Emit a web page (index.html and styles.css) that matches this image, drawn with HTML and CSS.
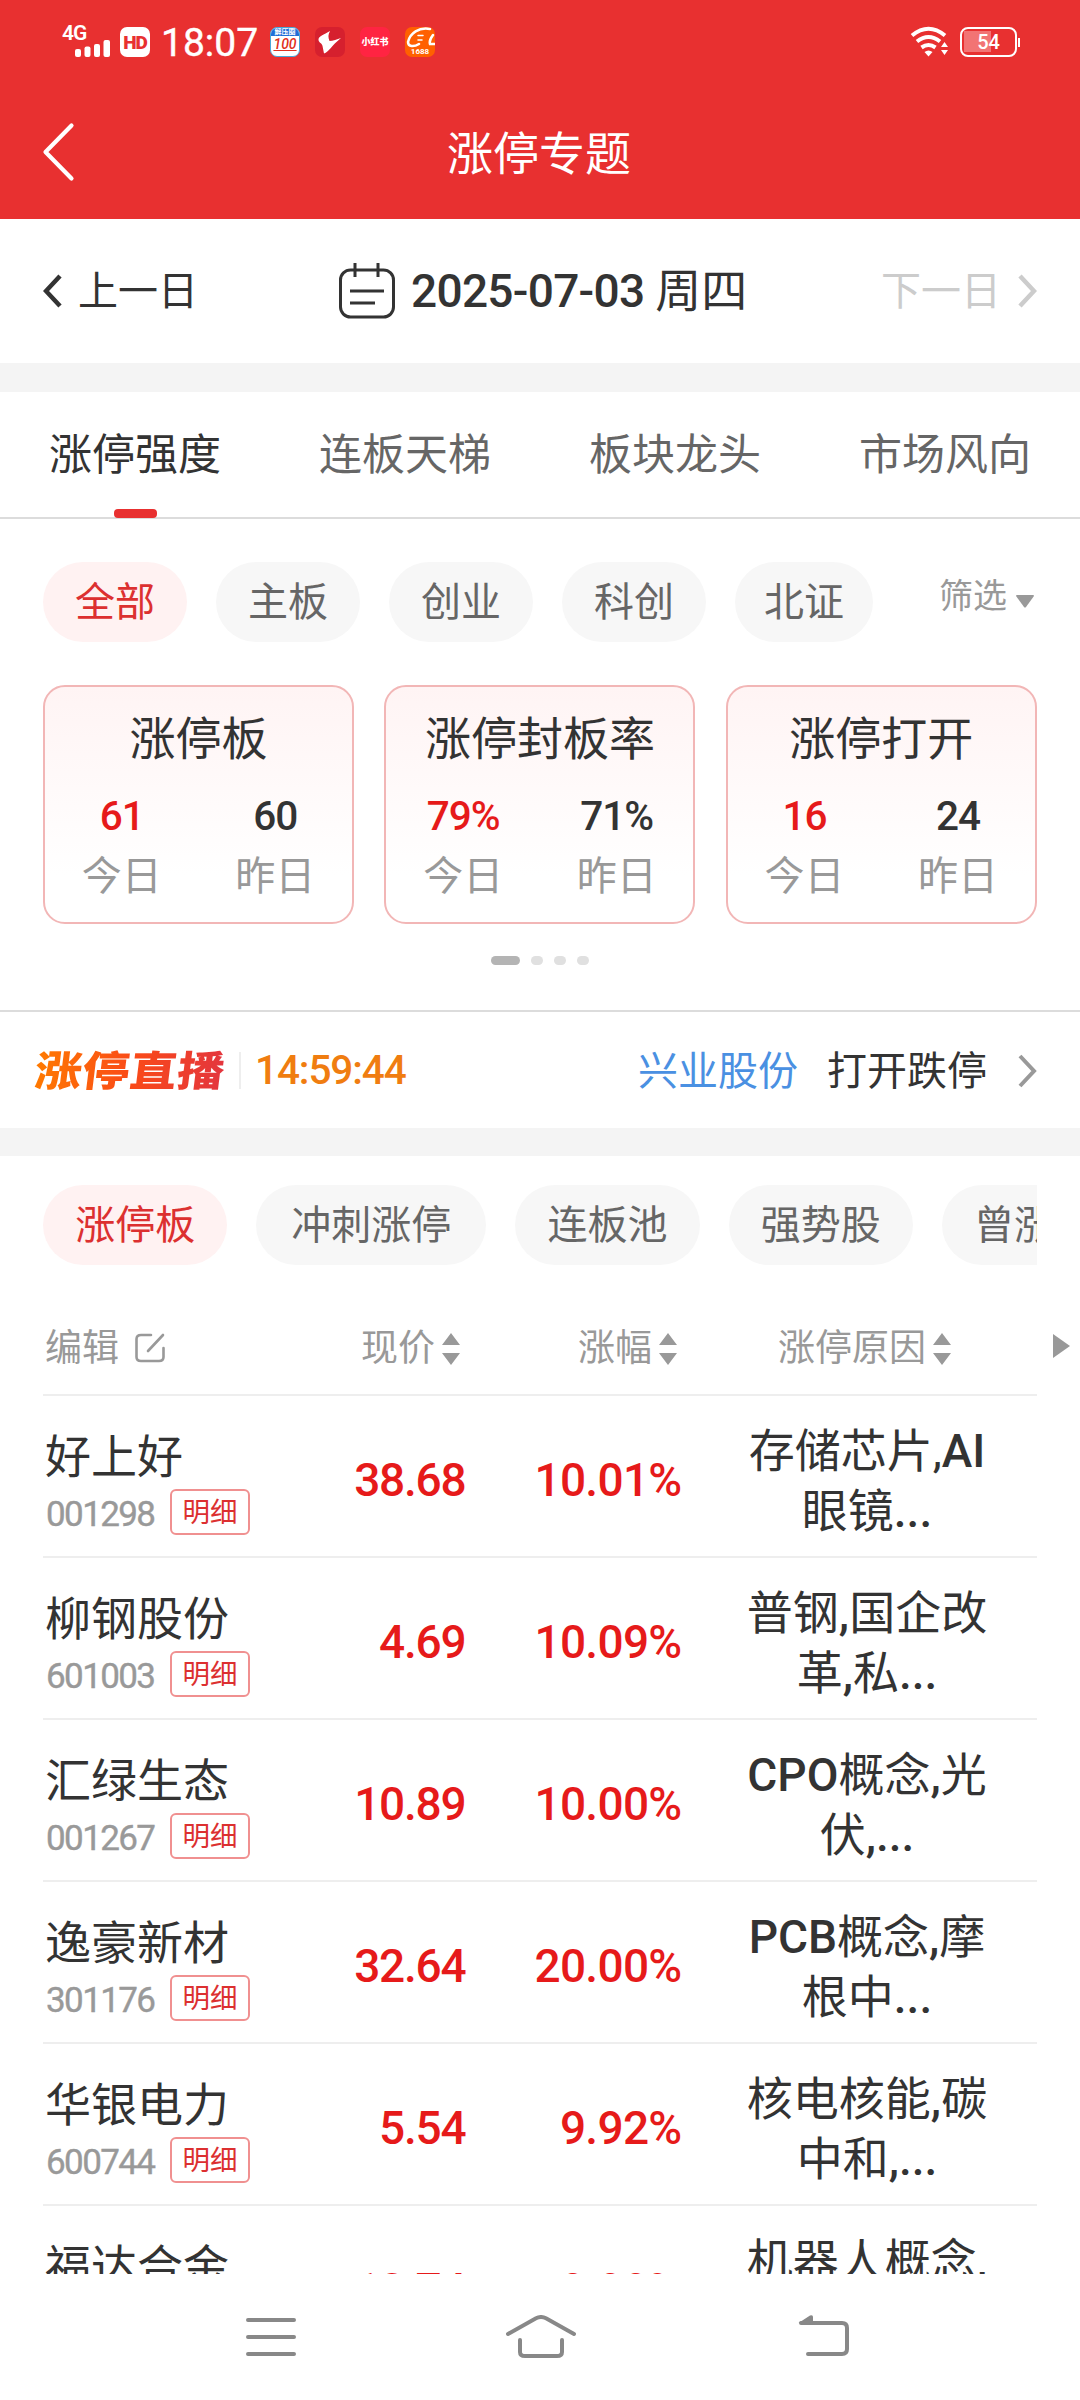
FILE: index.html
```
<!DOCTYPE html>
<html lang="zh-CN">
<head>
<meta charset="utf-8">
<title>涨停专题</title>
<link rel="stylesheet" href="styles.css">
</head>
<body>
<header class="top">
  <div class="status">
    <div class="signal">
      <span class="net">4G</span>
      <svg class="bars" width="36" height="18" viewBox="0 0 36 18" fill="#fff"><rect x="0" y="9" width="6" height="8" rx="2"/><rect x="9.500" y="6.500" width="6" height="10.500" rx="2"/><rect x="19" y="4" width="6" height="13" rx="2"/><rect x="28.500" y="0" width="6.500" height="17" rx="2"/></svg>
    </div>
    <span class="hd">HD</span>
    <span class="clock">18:07</span>
    <div class="apps">
      <div class="app app-score"><span class="strip">解压圈</span><span class="hundred">100</span></div>
      <div class="app app-bird"><svg width="30" height="30" viewBox="0 0 30 30"><path fill="#fff" d="M15 4C9 8 3 9 3.500 13C4 16 7 16 7.500 19L9 26.500C14 25 16 19 26 11C22 12 18 14 14.500 14C13 10 13 8 15 4Z"/></svg></div>
      <div class="app app-book">小红书</div>
      <div class="app app-ali"><svg width="30" height="30" viewBox="0 0 30 30" fill="none" stroke="#fff" stroke-width="2.500" stroke-linecap="round"><path d="M25 2C14 0 5 6 3 15C3 20 9 20 14 17"/><path d="M13 8.500H18M13 13H17" stroke-width="1.500"/><path d="M28 8C25 12 24 14 25 17H30"/></svg><span class="ali-num">1688</span></div>
    </div>
    <div class="right">
      <svg width="40" height="32" viewBox="0 0 40 32"><g fill="none" stroke="#fff" stroke-width="4"><path d="M2 9.500Q18.500 -4 35 9.500"/><path d="M7 15.500Q18.500 6.500 30 15.500"/><path d="M11.500 21.500Q18.500 16.500 25.500 21.500"/></g><path fill="#fff" d="M14.500 26Q18.500 23 22.500 26L18.500 30.500Z M31 21L34.500 16L38 21Z M31 24L34.500 29L38 24Z"/></svg>
      <div class="battery"><span>54</span></div><i class="nub"></i>
    </div>
  </div>
  <div class="titlebar">
    <svg class="back" width="34" height="60" viewBox="0 0 34 60"><path d="M29.500 3.500L3.500 30L29.500 56.500" fill="none" stroke="#fff" stroke-width="4.200" stroke-linecap="round" stroke-linejoin="round"/></svg>
    <h1>涨停专题</h1>
  </div>
</header>

<section class="dates">
  <div class="prev"><svg width="20" height="36" viewBox="0 0 20 36"><path d="M17 3L3 18L17 33" fill="none" stroke="#333" stroke-width="4.500"/></svg><span>上一日</span></div>
  <div class="date">
    <svg width="56" height="56" viewBox="0 0 56 56" fill="none" stroke="#333" stroke-width="3"><rect x="1.500" y="7" width="53" height="47" rx="10"/><path d="M16 0V14M39 0V14M11 28H45M11 40H36"/></svg>
    <span>2025-07-03 <span class="week">周四</span></span>
  </div>
  <div class="next"><span>下一日</span><svg width="20" height="36" viewBox="0 0 20 36"><path d="M3 3L17 18L3 33" fill="none" stroke="#ccc" stroke-width="4.500"/></svg></div>
</section>
<div class="band"></div>

<nav class="tabs">
  <span class="tab on">涨停强度</span><span class="tab">连板天梯</span><span class="tab">板块龙头</span><span class="tab">市场风向</span>
</nav>

<section class="strength">
  <div class="filters">
    <span class="pill on">全部</span><span class="pill">主板</span><span class="pill">创业</span><span class="pill">科创</span><span class="pill narrow">北证</span>
    <span class="sift">筛选<svg width="18" height="13" viewBox="0 0 18 13"><path fill="#999" d="M0 1Q0 0 1 0H17Q18 0 18 1L10 12Q9 13 8 12Z"/></svg></span>
  </div>
  <div class="cards">
    <div class="card"><h2>涨停板</h2><div class="pair"><b class="red">61</b><b>60</b><span>今日</span><span>昨日</span></div></div>
    <div class="card"><h2>涨停封板率</h2><div class="pair"><b class="red">79%</b><b>71%</b><span>今日</span><span>昨日</span></div></div>
    <div class="card"><h2>涨停打开</h2><div class="pair"><b class="red">16</b><b>24</b><span>今日</span><span>昨日</span></div></div>
  </div>
  <div class="dots"><i class="on"></i><i></i><i></i><i></i></div>
</section>

<section class="live">
  <span class="logo">涨停直播</span><i class="rule"></i><span class="time">14:59:44</span>
  <span class="stock">兴业股份</span><span class="event">打开跌停</span>
  <svg class="go" width="20" height="36" viewBox="0 0 20 36"><path d="M3 3L17 18L3 33" fill="none" stroke="#999" stroke-width="4"/></svg>
</section>
<div class="band low"></div>

<section class="list">
  <div class="pools"><span class="pill on">涨停板</span><span class="pill wide">冲刺涨停</span><span class="pill">连板池</span><span class="pill">强势股</span><span class="pill">曾涨停</span></div>
  <div class="thead">
    <span class="edit">编辑<svg width="30" height="30" viewBox="0 0 30 30" fill="none" stroke="#999" stroke-width="2.600" stroke-linecap="round"><path d="M16 2H6Q1.500 2 1.500 6V24Q1.500 28 6 28H24Q28.500 28 28.500 24V15M28 2L13 18"/></svg></span>
    <span class="h-price">现价<svg class="sort" viewBox="0 0 18 32"><path d="M9 0L18 12H0ZM9 32L18 20H0Z"/></svg></span>
    <span class="h-pct">涨幅<svg class="sort" viewBox="0 0 18 32"><path d="M9 0L18 12H0ZM9 32L18 20H0Z"/></svg></span>
    <span class="h-why">涨停原因<svg class="sort" viewBox="0 0 18 32"><path d="M9 0L18 12H0ZM9 32L18 20H0Z"/></svg></span>
    <svg class="more" width="17" height="24" viewBox="0 0 17 24"><path d="M0 0L17 12L0 24Z" fill="#999"/></svg>
  </div>
  <div class="rows">
    <div class="row"><div class="who"><p>好上好</p><div><span class="code">001298</span><span class="tag">明细</span></div></div><b>38.68</b><b class="pct">10.01%</b><div class="why">存储芯片,<em>AI</em><br>眼镜<em>...</em></div></div>
    <div class="row"><div class="who"><p>柳钢股份</p><div><span class="code">601003</span><span class="tag">明细</span></div></div><b>4.69</b><b class="pct">10.09%</b><div class="why">普钢<em>,</em>国企改<br>革<em>,</em>私<em>...</em></div></div>
    <div class="row"><div class="who"><p>汇绿生态</p><div><span class="code">001267</span><span class="tag">明细</span></div></div><b>10.89</b><b class="pct">10.00%</b><div class="why"><em>CPO</em>概念<em>,</em>光<br>伏<em>,...</em></div></div>
    <div class="row"><div class="who"><p>逸豪新材</p><div><span class="code">301176</span><span class="tag">明细</span></div></div><b>32.64</b><b class="pct">20.00%</b><div class="why"><em>PCB</em>概念<em>,</em>摩<br>根中<em>...</em></div></div>
    <div class="row"><div class="who"><p>华银电力</p><div><span class="code">600744</span><span class="tag">明细</span></div></div><b>5.54</b><b class="pct">9.92%</b><div class="why">核电核能<em>,</em>碳<br>中和<em>,...</em></div></div>
    <div class="row"><div class="who"><p>福达合金</p></div><b>10.74</b><b class="pct">9.99%</b><div class="why">机器人概念<em>,</em></div></div>
  </div>
</section>

<footer class="sysnav">
  <svg class="menu" width="52" height="40" viewBox="0 0 52 40" stroke="#888" stroke-width="4" stroke-linecap="round"><path d="M3 3H49M3 20H49M3 37H49"/></svg>
  <svg class="home" width="72" height="46" viewBox="0 0 72 46" fill="none" stroke="#888" stroke-width="4" stroke-linecap="round"><path d="M3 19L31 3.200Q36 0.800 41 3.200L69 19M15 25V37Q15 41 20 41H52Q57 41 57 37V25"/></svg>
  <svg width="52" height="44" viewBox="0 0 52 44"><path d="M3 8H44Q49 8 49 13V34Q49 39 44 39H10" fill="none" stroke="#888" stroke-width="4" stroke-linecap="round"/><path fill="#888" d="M0.500 8L12 0.500Q15 -0.500 15 2V9Z"/></svg>
</footer>
</body>
</html>
```
FILE: styles.css
```
* { box-sizing: border-box; margin: 0; padding: 0; }
body { width: 1080px; height: 2400px; overflow: hidden; background: #fff; color: #333; font-family: Roboto, "Noto Sans CJK SC", sans-serif; display: flex; flex-direction: column; }
svg { display: block; flex: none; }
i { display: block; flex: none; }
em { font-style: normal; font-weight: 500; }
h1, h2, p { font-weight: 400; }
.top { height: 219px; background: #e83030; color: #fff; flex: none; }
.status { height: 84px; padding: 0 60px 0 63px; display: flex; align-items: center; }
.signal { width: 57px; height: 34px; position: relative; }
.net { position: absolute; left: -1px; top: -2px; font-size: 21px; line-height: 21px; font-weight: 600; letter-spacing: -1px; }
.bars { position: absolute; left: 12px; top: 15px; }
.hd { width: 30px; height: 30px; border-radius: 7px; background: #fff; color: #e83030; font-size: 19px; line-height: 31px; font-weight: 900; text-align: center; letter-spacing: -1px; }
.clock { width: 108px; padding-left: 11px; font-size: 39px; line-height: 40px; margin-top: 2px; -webkit-text-stroke: 0.400px #fff; }
.apps { margin-left: 12px; display: flex; gap: 15px; }
.app { width: 30px; height: 30px; border-radius: 7px; overflow: hidden; flex: none; position: relative; text-align: center; white-space: nowrap; }
.app-score { background: #fff; border: 1px solid #49a6d8; display: flex; flex-direction: column; }
.strip { height: 8px; background: #1f6fd8; font-size: 7px; line-height: 8px; font-weight: 700; }
.hundred { color: #e03020; font-size: 14px; line-height: 17px; font-weight: 500; font-style: italic; text-decoration: underline; }
.app-bird { background: #d6202e; }
.app-book { background: #ff2442; font-size: 9px; line-height: 30px; font-weight: 900; }
.app-ali { background: #ff6000; }
.ali-num { position: absolute; left: 0; width: 30px; bottom: 1px; font-size: 8px; line-height: 8px; font-weight: 700; }
.right { margin-left: auto; display: flex; align-items: center; }
.battery { margin-left: 10px; width: 57px; height: 30px; border: 2.500px solid #fff; border-radius: 8px; padding: 2px; display: flex; background: linear-gradient(90deg, #f27474 27px, transparent 27px) no-repeat 2px 2px / 50px 21px; }
.battery span { width: 100%; text-align: center; font-size: 20px; line-height: 22px; font-weight: 500; }
.nub { width: 2px; height: 9px; background: #fff; margin-left: 1px; }
.titlebar { height: 135px; display: flex; align-items: center; padding-left: 42px; }
.back { margin-top: 1px; }
.titlebar h1 { font-size: 46px; line-height: 60px; width: 926px; text-align: center; padding-top: 4px; }

.dates { height: 144px; padding: 0 43px; display: flex; align-items: center; flex: none; font-size: 40px; }
.prev { width: 296px; display: flex; align-items: center; gap: 15px; }
.prev > span, .next > span { margin-top: -6px; }
.date { display: flex; align-items: center; gap: 16px; font-size: 46px; font-weight: 500; letter-spacing: -0.700px; white-space: nowrap; }
.date > span { margin-top: -9px; }
.week { font-weight: 400; letter-spacing: 0; }
.next { margin-left: auto; display: flex; align-items: center; gap: 16px; color: #ccc; }
.band { height: 29px; background: #f4f4f4; flex: none; }
.tabs { height: 127px; border-bottom: 2px solid #dcdcdc; display: grid; grid-template-columns: repeat(4, 1fr); flex: none; font-size: 43px; line-height: 127px; text-align: center; color: #666; }
.tab { display: flex; flex-direction: column; align-items: center; height: 126px; }
.tab.on { color: #333; }
.tab.on::after { content: ""; width: 43px; height: 9px; border-radius: 4px; background: #e83030; margin-top: -10px; }

.strength { height: 493px; padding: 43px 43px 0; border-bottom: 2px solid #dcdcdc; flex: none; }
.filters { display: flex; gap: 29px; align-items: center; }
.pill { width: 144px; height: 80px; border-radius: 40px; background: #f7f7f7; color: #666; font-size: 40px; line-height: 82px; text-align: center; flex: none; white-space: nowrap; }
.pill.on { background: #fff2f2; color: #dc3030; }
.pill.narrow { width: 138px; }
.sift { margin-left: auto; margin-right: 3px; display: flex; align-items: center; gap: 9px; font-size: 34px; line-height: 40px; color: #999; margin-top: -13px; }
.sift svg { margin-top: 12px; }
.cards { margin-top: 43px; display: grid; grid-template-columns: repeat(3, 311px); gap: 30.400px; }
.card { height: 239px; border: 2px solid #f2b6b6; border-radius: 22px; background: linear-gradient(#fff4f4, #fff 80%); text-align: center; padding-top: 20px; }
.card h2 { font-size: 46px; line-height: 64px; }
.pair { display: grid; grid-template-columns: 1fr 1fr; font-size: 40px; color: #999; }
.pair b { color: #333; font-weight: 500; font-size: 40.500px; line-height: 48px; margin-top: 21px; letter-spacing: -1px; }
.pair b.red { color: #e61a1a; }
.pair span { line-height: 60px; margin-top: 7px; }
.dots { display: flex; justify-content: center; gap: 11px; margin-top: 32px; }
.dots i { width: 12px; height: 9px; border-radius: 5px; background: #e0e0e0; }
.dots i.on { width: 29px; background: #b4b4b4; }

.live { height: 116px; padding: 0 43px 0 35px; display: flex; align-items: center; flex: none; font-size: 40px; white-space: nowrap; }
.logo { font-size: 47px; line-height: 56px; font-weight: 900; width: 194px; margin: 3px 10px 0 0; letter-spacing: 0.500px; color: transparent; background: linear-gradient(90deg, #ff7a00, #fa4a18 50%, #e23440); background-clip: text; -webkit-background-clip: text; transform: skewX(-7deg) scaleY(0.880); }
.rule { width: 2px; height: 37px; background: #eee; margin-right: 14px; }
.time { font-size: 40.500px; font-weight: 500; color: #f07d10; letter-spacing: -1.100px; }
.stock { margin-left: auto; color: #4a90e2; margin-top: -4px; }
.event { margin: -4px 30px 0 29px; }
.go { margin-top: 2px; }
.band.low { height: 28px; }

.list { height: 1118px; overflow: hidden; flex: none; }
.pools { margin: 29px 43px 0; display: flex; gap: 29px; overflow: hidden; }
.pools .pill { width: 184.300px; }
.pools .pill.wide { width: 230px; }
.thead { height: 129px; padding-top: 46px; display: flex; margin: 0 10px 0 45px; font-size: 37px; color: #999; align-items: flex-start; }
.thead span { display: flex; align-items: center; gap: 7px; height: 76px; line-height: 76px; }
.thead .edit { width: 316px; gap: 16px; }
.thead .edit svg { margin-top: -2px; }
.h-price { width: 217px; }
.h-pct { width: 200px; }
.sort { width: 18px; height: 32px; fill: #999; }
.more { margin: 23px 0 0 auto; }
.rows { margin: 0 43px; border-top: 2px solid #eee; }
.row { height: 162px; display: grid; grid-template-columns: 230px 192.500px 216px 371px; border-bottom: 2px solid #eee; }
.who { padding: 29px 0 0 2px; }
.who p { font-size: 46px; line-height: 64px; white-space: nowrap; }
.who div { display: flex; align-items: center; gap: 15px; }
.code { font-size: 35px; line-height: 40px; color: #999; letter-spacing: -1.600px; width: 110px; padding: 5px 0 0 1px; -webkit-text-stroke: 0.400px #999; }
.tag { width: 80px; height: 46px; border: 2px solid #f09090; border-radius: 6px; font-size: 27.500px; line-height: 43px; text-align: center; color: #dc3030; }
.row b { font-size: 46px; line-height: 56px; font-weight: 500; color: #e61a1a; text-align: right; margin-top: 56px; letter-spacing: -1.200px; }
.row b.pct { letter-spacing: -0.700px; }
.why { font-size: 46px; line-height: 60px; text-align: center; padding-top: 25px; font-weight: 400; white-space: nowrap; }

.sysnav { height: 126px; display: flex; padding: 41px 0 0 245px; flex: none; align-items: flex-start; }
.menu { margin-top: 2px; }
.home { margin: 0 221px 0 208px; }
```
